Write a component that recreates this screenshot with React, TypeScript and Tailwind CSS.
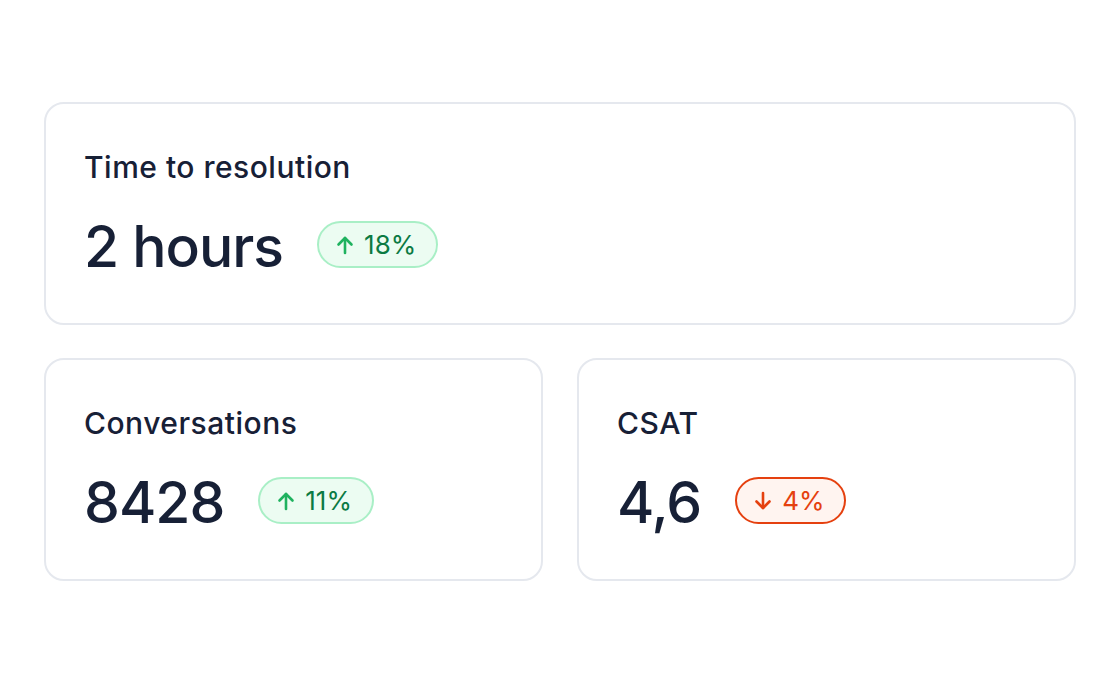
import React from "react";

const ArrowUp = () => (
  <svg width="18" height="20" viewBox="0 0 18 20" fill="none" stroke="currentColor" strokeWidth="2.6" strokeLinecap="round" strokeLinejoin="round">
    <path d="M9 18V3" />
    <path d="M2.5 9.5L9 3l6.5 6.5" />
  </svg>
);
const ArrowDown = () => (
  <svg width="18" height="20" viewBox="0 0 18 20" fill="none" stroke="currentColor" strokeWidth="2.6" strokeLinecap="round" strokeLinejoin="round">
    <path d="M9 2v15" />
    <path d="M2.5 10.5L9 17l6.5-6.5" />
  </svg>
);

function Badge({ up, value }: { up: boolean; value: string }) {
  return up ? (
    <div className="-mt-[5px] flex h-[47px] items-center gap-[10px] rounded-full border-2 border-[#a9efc6] bg-[#ecfcf2] pl-[17px] pr-[20px]">
      <span className="text-[#1fb25f]"><ArrowUp /></span>
      <span className="text-[26px] leading-none text-[#0b7a43]">{value}</span>
    </div>
  ) : (
    <div className="-mt-[5px] flex h-[47px] items-center gap-[10px] rounded-full border-2 border-[#e5400f] bg-[#fff4f0] pl-[17px] pr-[20px]">
      <span className="text-[#e5400f]"><ArrowDown /></span>
      <span className="text-[26px] leading-none text-[#e5400f]">{value}</span>
    </div>
  );
}

function Card({ title, value, up, pct }: { title: string; value: string; up: boolean; pct: string }) {
  return (
    <div className="flex h-[223px] flex-col rounded-[20px] border-2 border-[#e5e8ee] bg-white px-[38px] pt-[45px]">
      <div className="text-[30px] font-medium leading-[36px] tracking-[0.5px] text-[#172036]">{title}</div>
      <div className="mt-[32px] flex items-center gap-[34px]">
        <div className="text-[57px] font-medium leading-[60px] tracking-[-1px] text-[#172036]">{value}</div>
        <Badge up={up} value={pct} />
      </div>
    </div>
  );
}

export default function App() {
  return (
    <div className="h-[684px] w-[1120px] bg-white px-[44px] pt-[102px]" style={{ fontFamily: "Inter, 'Noto Sans', sans-serif" }}>
      <div className="w-[1032px]">
        <Card title="Time to resolution" value="2 hours" up pct="18%" />
        <div className="mt-[33px] grid grid-cols-2 gap-[34px]">
          <Card title="Conversations" value="8428" up pct="11%" />
          <Card title="CSAT" value="4,6" up={false} pct="4%" />
        </div>
      </div>
    </div>
  );
}
